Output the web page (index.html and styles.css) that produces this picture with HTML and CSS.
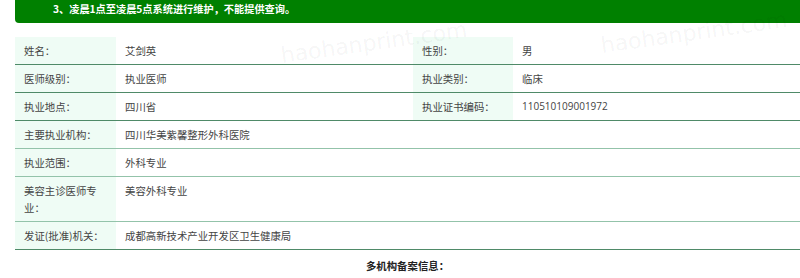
FILE: index.html
```html
<!DOCTYPE html>
<html lang="zh-CN">
<head>
<meta charset="utf-8">
<title>医师信息</title>
<link rel="stylesheet" href="styles.css">
</head>
<body>
<div class="page">
  <div class="notice">3、凌晨1点至凌晨5点系统进行维护，不能提供查询。</div>
  <table class="info">
    <colgroup>
      <col class="c-label"><col class="c-value"><col class="c-label2"><col class="c-value2">
    </colgroup>
    <tr class="dark"><td class="lab">姓名：</td><td class="val">艾剑英</td><td class="lab">性别：</td><td class="val">男</td></tr>
    <tr class="dark"><td class="lab">医师级别：</td><td class="val">执业医师</td><td class="lab">执业类别：</td><td class="val">临床</td></tr>
    <tr class="dark"><td class="lab">执业地点：</td><td class="val">四川省</td><td class="lab">执业证书编码：</td><td class="val num">110510109001972</td></tr>
    <tr class="light"><td class="lab">主要执业机构：</td><td class="val" colspan="3">四川华美紫馨整形外科医院</td></tr>
    <tr class="light"><td class="lab">执业范围：</td><td class="val" colspan="3">外科专业</td></tr>
    <tr class="light"><td class="lab">美容主诊医师专业：</td><td class="val" colspan="3">美容外科专业</td></tr>
    <tr class="dark"><td class="lab">发证(批准)机关：</td><td class="val" colspan="3">成都高新技术产业开发区卫生健康局</td></tr>
  </table>
  <div class="multi">多机构备案信息：</div>
  <div class="wm wm2">haohanprint.com</div>
  <div class="wm wm3">haohanprint.com</div>
</div>
</body>
</html>
```

FILE: styles.css
```css
html, body {
  margin: 0;
  padding: 0;
  background: #ffffff;
}
.page {
  position: relative;
  padding-left: 15px;
  overflow: hidden;
  height: 278px;
  font-family: "Noto Sans CJK SC", "Open Sans", sans-serif;
}
.notice {
  background: #008000;
  color: #ffffff;
  font-weight: bold;
  font-size: 10.2px;
  line-height: 17px;
  height: 23px;
  padding-left: 38px;
  border-bottom-left-radius: 4px;
  box-sizing: border-box;
}
.info {
  margin-top: 14px;
  width: 785px;
  border-collapse: collapse;
  table-layout: fixed;
  font-size: 10.4px;
  color: #444;
}
.c-label { width: 101px; }
.c-value { width: 297px; }
.c-label2 { width: 100px; }
.c-value2 { width: 287px; }
.info td {
  padding: 5px 9px;
  line-height: 17px;
  vertical-align: top;
}
.info td.lab {
  background: #effcf5;
  padding-right: 10px;
}
.info td.num {
  font-family: "Open Sans", "Noto Sans CJK SC", sans-serif;
  font-size: 10px;
}
.info tr.dark td { border-bottom: 1px solid #4f8a68; }
.info tr.light td { border-bottom: 1px solid #93c3aa; }
.multi {
  text-align: center;
  font-weight: bold;
  font-size: 10.4px;
  color: #222;
  line-height: 17px;
  margin-top: 7px;
}
.wm {
  position: absolute;
  font-family: "DejaVu Sans", sans-serif;
  font-size: 22px;
  color: rgba(0, 0, 0, 0.05);
  transform: rotate(-8deg);
  white-space: nowrap;
  pointer-events: none;
}
.wm2 { left: 280px; top: 30px; }
.wm3 { left: 600px; top: 20px; }
```
